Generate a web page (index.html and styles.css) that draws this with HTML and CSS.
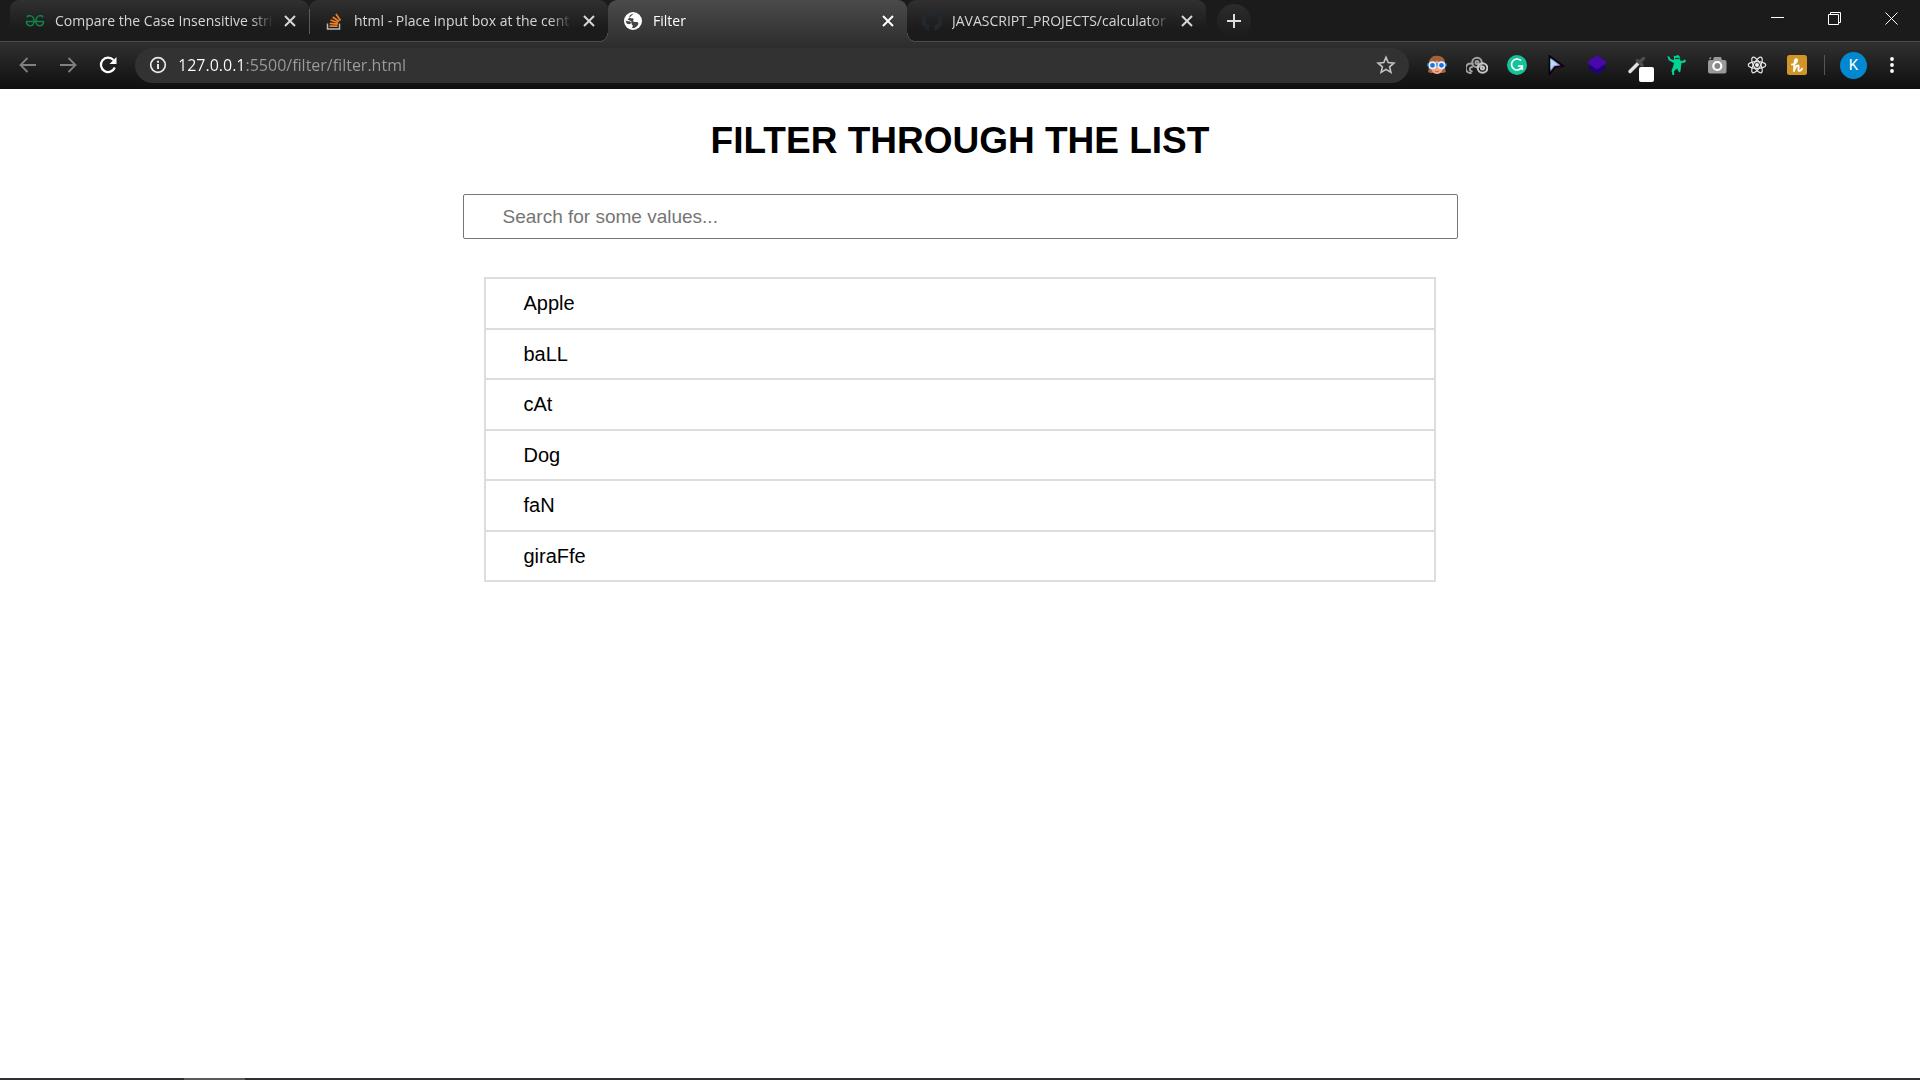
FILE: index.html
```html
<!DOCTYPE html>
<html lang="en">
<head>
<meta charset="utf-8">
<meta name="viewport" content="width=device-width, initial-scale=1">
<title>Filter</title>
<link rel="stylesheet" href="styles.css">
</head>
<body>
<header class="browser">
  <div class="strip">
    <div class="tab">
      <svg class="favicon" viewBox="0 0 20 20" fill="none" stroke="#12804a" stroke-width="1.5"><path d="M1 10.500h18M2 6.500C3 3.500 9 4 9 10 9 16 2.500 16.500 1.200 10.500M18 6.500C17 3.500 11 4 11 10 11 16 17.500 16.500 18.800 10.500"/></svg>
      <button class="tab-title">Compare the Case Insensitive stri</button>
      <button class="close" aria-label="Close tab"><svg viewBox="0 0 12 12"><path d="M1 1l10 10M11 1L1 11"/></svg></button>
    </div>
    <div class="tab divided">
      <svg class="favicon" viewBox="0 0 20 20" fill="none"><path d="M3.500 12.500v5.500h12v-5.500" stroke="#b5bac0" stroke-width="1.500"/><path d="M5.500 15.200h8M5.700 12.300l8 .9M6.500 9l7.500 2.700M8.700 6l6.300 4.500M12 3l4.500 6.500" stroke="#f48024" stroke-width="1.700"/></svg>
      <button class="tab-title">html - Place input box at the cent</button>
      <button class="close" aria-label="Close tab"><svg viewBox="0 0 12 12"><path d="M1 1l10 10M11 1L1 11"/></svg></button>
    </div>
    <div class="tab active">
      <svg class="favicon" viewBox="0 0 20 20"><circle cx="10" cy="10" r="9" fill="#fff"/><path d="M10.500 2.800C7 3.500 5.500 5.500 7 6.800s3-.3 3.500 1.200-1.500 1.500 0 2.500 3.500 0 4.500 1 0 3-2 4.500c-1.500 1.200-3 1.300-4 1l1-2.500c-2-1-1-3-2.500-3.800S4 10.500 2.700 9.500c.3 1 .5 3 2 3.500 2 .5 3.800-.5 3.800-2 0-1-2-1.500-4-2.500z" fill="#454545"/></svg>
      <button class="tab-title">Filter</button>
      <button class="close" aria-label="Close tab"><svg viewBox="0 0 12 12"><path d="M1 1l10 10M11 1L1 11"/></svg></button>
    </div>
    <div class="tab">
      <svg class="favicon" viewBox="0 0 16 16"><path fill="#24292e" d="M8 0C3.580 0 0 3.580 0 8c0 3.540 2.290 6.530 5.470 7.590.4.070.55-.17.55-.38v-1.490c-2.230.480-2.700-.94-2.700-.94-.36-.92-.89-1.170-.89-1.170-.73-.5.060-.49.060-.49.8.060 1.230.82 1.230.82.71 1.220 1.870.87 2.330.66.070-.52.280-.87.500-1.070-1.780-.2-3.640-.89-3.640-3.950 0-.87.310-1.590.82-2.150-.08-.2-.36-1.020.08-2.120 0 0 .67-.21 2.200.82a7.600 7.600 0 0 1 4 0c1.530-1.040 2.200-.82 2.200-.82.440 1.100.160 1.920.080 2.120.51.560.82 1.270.82 2.150 0 3.070-1.870 3.750-3.650 3.950.290.250.540.730.540 1.480v2.200c0 .21.150.46.550.38A8 8 0 0 0 16 8c0-4.420-3.580-8-8-8z"/></svg>
      <button class="tab-title">JAVASCRIPT_PROJECTS/calculator</button>
      <button class="close" aria-label="Close tab"><svg viewBox="0 0 12 12"><path d="M1 1l10 10M11 1L1 11"/></svg></button>
    </div>
    <button class="new-tab" aria-label="New tab"><svg viewBox="0 0 14 14"><path d="M7 0v14M0 7h14"/></svg></button>
    <div class="window-controls">
      <button aria-label="Minimize"><svg viewBox="0 0 14 14"><path d="M0 5.500h13"/></svg></button>
      <button aria-label="Restore"><svg viewBox="0 0 14 14"><path d="M.5 2.500h10v10H.5zM2.500 2.500v-2h10v10h-2"/></svg></button>
      <button aria-label="Close window"><svg viewBox="0 0 14 14"><path d="M.5.5l12 12M12.500.5l-12 12"/></svg></button>
    </div>
  </div>
  <div class="toolbar">
    <nav class="nav-buttons" aria-label="History">
      <button aria-label="Back"><svg viewBox="0 0 20 20" stroke="#808080" stroke-width="1.800"><path d="M18 10H3M9.500 3L2.500 10l7 7"/></svg></button>
      <button aria-label="Forward"><svg viewBox="0 0 20 20" stroke="#808080" stroke-width="1.800"><path d="M2 10h15M10.500 3l7 7-7 7"/></svg></button>
      <button aria-label="Reload"><svg viewBox="0 0 20 20" stroke="#fff" stroke-width="2.200"><path d="M16.800 12.500A7.200 7.200 0 1 1 15.500 5"/><path d="M18.500 2v7h-7z" fill="#fff" stroke="none"/></svg></button>
    </nav>
    <div class="omnibox">
      <svg class="info" viewBox="0 0 18 18"><circle cx="9" cy="9" r="7.300" fill="none" stroke="#e8e8e8" stroke-width="1.700"/><path d="M9 8v5M9 4.700v2" stroke="#e8e8e8" stroke-width="2"/></svg>
      <input class="address" type="text" aria-label="Address" value="127.0.0.1:5500/filter/filter.html">
      <button class="star" aria-label="Bookmark this tab"><svg viewBox="0 0 20 20" fill="none" stroke="#c4c4c4" stroke-width="1.600"><path d="M10 2.300l2.200 5.300 5.700.5-4.300 3.700 1.300 5.600-4.900-3-4.900 3 1.300-5.600L2.100 8.100l5.700-.5z"/></svg></button>
    </div>
    <div class="extensions">
      <button aria-label="Extension: goggles"><svg viewBox="0 0 20 20"><path d="M1 17C2.500 14 .5 9 2.500 5 4.500 1 8 .5 10.500.8 15 1 17.500 3.500 18 7c.4 4-.5 7 1 10-2 1-5 1-5 1H5s-2.500 0-4-1z" fill="#a5623a"/><path d="M4 8.500C7 8.500 9 7 10 5.500c1.500 2 4 3 6 3V14c-1 3-3.500 5-6 5s-5-2-6-5z" fill="#f0a888"/><path d="M0 9.800h20" stroke="#1673c9" stroke-width="3"/><circle cx="5.500" cy="10.300" r="3.200" fill="#1673e0" stroke="#e6f2fc" stroke-width="1.600"/><circle cx="14.500" cy="10.300" r="3.200" fill="#1673e0" stroke="#e6f2fc" stroke-width="1.600"/><path d="M8 16q2 1.500 4 0" stroke="#bd6052" fill="none"/></svg></button>
      <button aria-label="Extension: rings"><svg class="wide" viewBox="0 0 22 20" fill="none" stroke="#a2a2a2" stroke-width="2"><circle cx="11" cy="7.500" r="4.800"/><circle cx="11" cy="7.500" r="1.500"/><path d="M7.500 9.500a4.800 4.800 0 1 0-2 8.500M7 12.500a2 2 0 1 0-.5 3.500"/><circle cx="16.500" cy="13" r="4.800" stroke="#c8c8c8"/><circle cx="16.500" cy="13" r="1.500" stroke="#c8c8c8"/></svg></button>
      <button aria-label="Extension: grammar"><svg viewBox="0 0 20 20"><circle cx="10" cy="10" r="10" fill="#15c39a"/><path d="M14 5.700A5.500 5.500 0 1 0 15.300 11H11M15.300 11v4" fill="none" stroke="#fff" stroke-width="1.700"/></svg></button>
      <button aria-label="Extension: cursor"><svg viewBox="0 0 20 20"><path d="M2.500 1L16 11l-8 1-5.500 7z" fill="#b98be8" stroke="#050505" stroke-width="1.800"/><path d="M3.500 4l7 5.500-4 1-3 4z" fill="#a7e4fb"/></svg></button>
      <button aria-label="Extension: layers"><svg viewBox="0 0 20 20"><path d="M0 12.500L10 6l10 6.500L10 19z" fill="#21007d"/><path d="M0 7.500L10 0l10 7.500L10 14.500z" fill="#4908aa"/></svg></button>
      <button class="picker" aria-label="Extension: colour picker"><svg viewBox="0 0 20 20" fill="none"><path d="M3 16.500L11.500 8" stroke="#e2e2e2" stroke-width="3.500" stroke-linecap="round"/><path d="M10.500 5.500l4.500 4.500M13 7l3.500-3.500" stroke="#4d4d4d" stroke-width="3.500" stroke-linecap="round"/></svg><span class="swatch"></span></button>
      <button aria-label="Extension: runner"><svg viewBox="0 0 20 20"><path d="M.5 1l2 .8L3.500 4 7 5V2.500L6.500.8 8.500 1 10.500 0l2 1 .7 2.500-.2 2 3 .5 1-1.500 2 .8-.8 2.200-3.700.5-.5 3.500L13.500 16l-.8 1.500-1.500-1.500-1-2.500-1.800 1.300L7 16.500 7.300 20H5.500L4.500 15.500 6 12l1-4L4 6.500 1.500 5z" fill="#00d593"/><path d="M8 3.500h4.500" stroke="#17362c" stroke-width="1.200"/></svg></button>
      <button aria-label="Extension: camera"><svg viewBox="0 0 20 20"><path d="M1 7q0-2 2-2h3l1-3h7l1 3h2.500q2 0 2 2v9.500q0 2-2 2H3q-2 0-2-2z" fill="#999"/><path d="M2.500 4l1.500-1.500" stroke="#999" stroke-width="1.500"/><circle cx="10.300" cy="11" r="4" fill="#858585" stroke="#fff" stroke-width="2.200"/></svg></button>
      <button aria-label="Extension: atom"><svg viewBox="0 0 20 20" fill="none" stroke="#e5e5e5" stroke-width="1.200"><ellipse cx="10" cy="10" rx="8.800" ry="3.400"/><ellipse cx="10" cy="10" rx="8.800" ry="3.400" transform="rotate(60 10 10)"/><ellipse cx="10" cy="10" rx="8.800" ry="3.400" transform="rotate(120 10 10)"/><circle cx="10" cy="10" r="1.400" fill="#fff"/></svg></button>
      <button aria-label="Extension: coupons"><svg viewBox="0 0 20 20"><rect width="20" height="20" rx="2.500" fill="#cf9526"/><path d="M5 9.500C8 9 10.500 7 10 4.800 9 3 7.500 5 7.500 8.500L7 16c.8-3 2.500-6 4.200-5.500 1.500.6-.5 3.800.3 5 .8.900 2.500 0 3.500-1.800" fill="none" stroke="#fff" stroke-width="1.900" stroke-linecap="round" stroke-linejoin="round"/></svg></button>
    </div>
    <button class="avatar" aria-label="Profile K">K</button>
    <button class="menu" aria-label="Browser menu"><svg viewBox="0 0 4 18" fill="#fff"><circle cx="2" cy="3" r="1.900"/><circle cx="2" cy="9" r="1.900"/><circle cx="2" cy="15" r="1.900"/></svg></button>
  </div>
</header>
<main class="page">
  <h1>FILTER THROUGH THE LIST</h1>
  <input class="search" type="text" aria-label="Search the list" placeholder="Search for some values...">
  <ul class="items">
    <li>Apple</li>
    <li>baLL</li>
    <li>cAt</li>
    <li>Dog</li>
    <li>faN</li>
    <li>giraFfe</li>
  </ul>
</main>
<footer class="taskbar"><span class="running"></span></footer>
</body>
</html>
```
FILE: styles.css
```css
* { box-sizing: border-box; }

body {
  margin: 0;
  min-height: 100vh;
  display: flex;
  flex-direction: column;
  background: #fff;
  color: #000;
  font-family: "Liberation Sans", Arial, sans-serif;
}

button, input {
  margin: 0;
  padding: 0;
  border: 0;
  background: none;
  font: inherit;
  color: inherit;
}

svg { display: block; flex: none; }

/* Browser frame */
.browser {
  background: #1b1b1b;
  color: #fff;
  font-family: "Open Sans", "Noto Sans", sans-serif;
}

.strip {
  display: flex;
  height: 42px;
  padding-left: 10px;
  border-bottom: 1px solid #4b4b4b;
}

.tab {
  position: relative;
  display: flex;
  align-items: center;
  flex: 0 1 299px;
  min-width: 0;
  gap: 10px;
  padding: 0 13px 0 15px;
  border-radius: 9px 9px 0 0;
  background: linear-gradient(#303030, #1b1b1b 70%);
  color: #d6d6d6;
}

.divided::before {
  content: "";
  position: absolute;
  left: 0;
  top: 9px;
  width: 1px;
  height: 25px;
  background: #5a5a5a;
}

.active {
  margin-bottom: -1px;
  padding-bottom: 1px;
  background: linear-gradient(#4b4b4b, #303030);
  color: #fff;
  z-index: 1;
}

.active::before, .active::after {
  content: "";
  position: absolute;
  bottom: 0;
  width: 9px;
  height: 9px;
}

.active::before {
  right: 100%;
  background: radial-gradient(circle at 0 0, transparent 8px, #4b4b4b 8px, #4b4b4b 9px, #323232 9px);
}

.active::after {
  left: 100%;
  background: radial-gradient(circle at 100% 0, transparent 8px, #4b4b4b 8px, #4b4b4b 9px, #323232 9px);
}

.favicon { width: 20px; height: 20px; }

.tab-title {
  flex: 1;
  min-width: 0;
  overflow: hidden;
  white-space: nowrap;
  text-align: left;
  font-size: 14px;
  line-height: 20px;
  -webkit-mask-image: linear-gradient(to left, transparent, #000 24px);
  mask-image: linear-gradient(to left, transparent, #000 24px);
}

.close svg {
  width: 12px;
  height: 12px;
  stroke: currentColor;
  stroke-width: 2;
}

.new-tab {
  display: grid;
  place-items: center;
  width: 34px;
  height: 34px;
  margin: 4px 0 0 11px;
  border-radius: 50%;
  background: linear-gradient(#2c2c2c, #1b1b1b);
}

.new-tab svg {
  width: 14px;
  height: 14px;
  stroke: #ddd;
  stroke-width: 2;
}

.window-controls { display: flex; margin-left: auto; }

.window-controls button {
  display: flex;
  justify-content: center;
  width: 57px;
  padding-top: 12px;
}

.window-controls svg {
  width: 14px;
  height: 14px;
  fill: none;
  stroke: #fff;
}

.toolbar {
  display: flex;
  align-items: center;
  height: 47px;
  padding: 0 16px 1px 8px;
  background: linear-gradient(#303030, #0f0f0f);
}

.nav-buttons { display: flex; margin-right: 7px; }

.nav-buttons button {
  display: grid;
  place-items: center;
  width: 40px;
  height: 40px;
}

.nav-buttons svg { width: 20px; height: 20px; fill: none; }

.omnibox {
  display: flex;
  align-items: center;
  flex: 1;
  min-width: 0;
  height: 35px;
  gap: 11px;
  padding: 0 13px 0 14px;
  border-radius: 18px;
  background: #323232;
}

.info { width: 18px; height: 18px; }

/* The host part of the address is brighter than the rest. */
.address {
  flex: 1;
  min-width: 0;
  font-size: 16px;
  line-height: 24px;
  color: transparent;
  background: linear-gradient(to right, #fff 67px, #9c9c9c 67px);
  -webkit-background-clip: text;
  background-clip: text;
}

.star svg { width: 20px; height: 20px; }

.extensions {
  display: flex;
  margin-left: 8px;
}

.extensions button {
  position: relative;
  display: grid;
  place-items: center;
  width: 40px;
  height: 40px;
}

.extensions svg { width: 20px; height: 20px; }
.extensions .wide { width: 22px; }

.swatch {
  position: absolute;
  right: 3px;
  bottom: 3px;
  width: 15px;
  height: 15px;
  border-radius: 2px;
  background: #fff;
}

.extensions::after {
  content: "";
  align-self: center;
  width: 1px;
  height: 20px;
  margin-left: 7px;
  background: #555;
}

.avatar {
  width: 27px;
  height: 27px;
  margin: 0 13px 0 15px;
  border-radius: 50%;
  background: #0288d1;
  font-family: Roboto, sans-serif;
  font-size: 15px;
  line-height: 27px;
  text-align: center;
}

.menu {
  display: grid;
  place-items: center;
  width: 24px;
  height: 40px;
}

.menu svg { width: 4px; height: 18px; }

/* Page */
.page {
  flex: 1;
  width: 995px;
  max-width: 100%;
  margin: 0 auto;
}

h1 {
  margin: 30px 0 31px;
  font-size: 37px;
  line-height: 44px;
  text-align: center;
}

.search {
  display: block;
  width: 100%;
  height: 45px;
  padding: 0 39px;
  border: 1px solid #767676;
  border-radius: 2px;
  font-size: 19px;
}

.search::placeholder { color: #757575; opacity: 1; }

.items {
  display: grid;
  grid-auto-rows: 1fr;
  min-height: 305px;
  margin: 38px 22px 0 21px;
  padding: 0;
  border: 1px solid #ddd;
  list-style: none;
  font-size: 20px;
  line-height: 24px;
}

.items li {
  display: flex;
  align-items: center;
  padding: 0 38px;
  border: 1px solid #ddd;
}

.taskbar {
  height: 2px;
  padding-left: 184px;
  background: #302f31;
}

.running {
  display: block;
  width: 61px;
  height: 2px;
  background: #5a5a5a;
}
```
